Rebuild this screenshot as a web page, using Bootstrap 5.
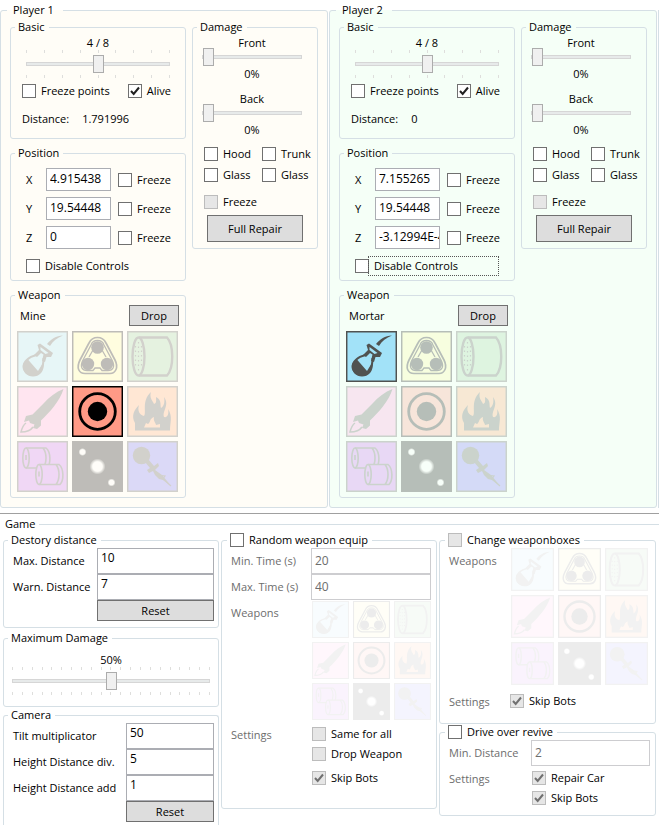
<!DOCTYPE html>
<html lang="en">
<head>
<meta charset="utf-8">
<meta name="viewport" content="width=device-width, initial-scale=1">
<title>Player and game settings</title>
<link rel="stylesheet" href="https://cdn.jsdelivr.net/npm/bootstrap@5.3.0/dist/css/bootstrap.min.css">
<style>
body { font: 11px/16px "Open Sans", "Noto Sans", sans-serif; color: #000; background: #fff; padding-top: 2px; }
fieldset { border: 1px solid #d5dfe5; border-radius: 3px; }
legend { float: none; width: auto; font-size: 11px; line-height: 16px; margin: 0 0 0 4px; padding: 0 4px 0 3px; }
legend.head-player { margin-left: 6px; padding: 0 9px 0 6px; }
legend.head-game { margin-left: 0; padding: 0 4px 0 5px; }
legend.head-check { margin-left: 5px; }
legend .ck { display: flex; }
.players { display: grid; grid-template-columns: 1fr 1fr 1px; }
.next-edge { border-left: 1px solid #d5dfe5; margin-top: 8px; }
.p-one { background: #fffdf7; margin-right: 1px; }
.p-two { background: #f5fff7; margin-right: 1px; }
.panes { display: grid; grid-template-columns: 176fr 126fr; gap: 6px; padding: 1px 9px 9px; align-items: start; }
.gap6 { gap: 6px; }
.ck { display: inline-flex; align-items: center; gap: 5px; line-height: 16px; white-space: nowrap; }
.ck input { appearance: none; flex: none; width: 14px; height: 14px; margin: 0; border: 1px solid #707070; background: #fff center/12px 12px no-repeat; }
.ck input:disabled { border-color: #bcbcbc; background-color: #e6e6e6; }
.ck input:checked { background-image: url("data:image/svg+xml,%3Csvg xmlns='http://www.w3.org/2000/svg' viewBox='0 0 12 12'%3E%3Cpath d='M2 6L4.700 9L10 2.500' fill='none' stroke='%23212121' stroke-width='2'/%3E%3C/svg%3E"); }
.ck input:checked:disabled { background-image: url("data:image/svg+xml,%3Csvg xmlns='http://www.w3.org/2000/svg' viewBox='0 0 12 12'%3E%3Cpath d='M2 6L4.700 9L10 2.500' fill='none' stroke='%23707070' stroke-width='2'/%3E%3C/svg%3E"); }
.focus-dots { gap: 1px; }
.focus-dots span { outline: 1px dotted #555; outline-offset: 1px; padding-left: 4px; width: 127px; }
.tbx { width: 100%; min-width: 0; border: 1px solid #abadb3; border-radius: 0; background: #fff; color: #000; height: 23px; padding: 0 0 3px 3px; font-size: 12px; line-height: 16px; }
.tbx:disabled { border-color: #cdcdd0; color: #6d6d6d; padding-bottom: 1px; }
.tall .tbx { height: 26px; }
.tall .tbx:enabled { padding-bottom: 7px; }
.push { border: 1px solid #707070; background: #ddd; color: #000; border-radius: 0; padding: 0; font-size: 11px; line-height: 16px; height: 21px; min-width: 50px; }
.push:hover { background: #bee6fd; border-color: #3c7fb1; color: #000; }
.push-lg { height: 27px; }
.range { appearance: none; display: block; width: 100%; height: 18px; margin: 0; background: transparent; }
.range::-webkit-slider-runnable-track { height: 4px; background: #e7eaea; border: 1px solid #d6d6d6; }
.range::-webkit-slider-thumb { appearance: none; width: 11px; height: 18px; margin-top: -8px; background: #f0f0f0; border: 1px solid #acacac; }
.ticks { display: flex; justify-content: space-between; height: 3px; margin: 2px 0; }
.ticks i { width: 1px; background: #dededc; }
.slide-label { margin-bottom: -3px; }
.basic-in { padding: 0 11px 11px; }
.basic-slide { padding: 0 4px; }
.checks { gap: 18px; padding-top: 3px; }
.dist { gap: 13px; padding-top: 12px; }
.pos-in { padding: 7px 12px 6px 15px; }
.xyz { display: grid; grid-template-columns: 20px 65px auto; row-gap: 6px; align-items: center; }
.xyz .ck { margin-left: 7px; }
.lock { padding-top: 9px; }
.dmg-in { padding: 0 10px; }
.dmg-slide { padding-right: 5px; margin-left: -1px; }
.pct { margin-bottom: 9px; }
.two { display: grid; grid-template-columns: 58px auto; row-gap: 5px; padding-left: 1px; }
.frz { padding: 11px 0 0 1px; }
.dmg-btn { padding: 5px 4px 6px; }
.wp-in { padding: 2px 6px 5px; }
.wp-head { padding-left: 3px; margin-bottom: 5px; }
.wgrid { display: grid; grid-template-columns: repeat(3, 51px); gap: 4px; }
.wgrid button { display: block; border: 0; padding: 0; background: none; aspect-ratio: 1; opacity: .25; }
.wgrid button.active { opacity: 1; }
.wgrid svg { display: block; width: 100%; height: 100%; }
.w36 { grid-template-columns: repeat(3, 37px); gap: 4px; }
.w43 { grid-template-columns: repeat(3, 43px); }
.w36 button, .w43 button { opacity: .07; }
.w36-box { padding: 1px 0 2px 1px; }
.inset { padding-left: 1px; }
.split { border-top: 1px solid #a0a0a0; margin-top: 5px; padding-top: 2px; }
.game { border-width: 1px 0 0; border-radius: 0; }
.game-cols { display: grid; grid-template-columns: 216fr 216fr 217fr; gap: 2px; padding: 0 3px; }
.dim { color: #6d6d6d; }
.left-col { gap: 2px; }
.max-in { padding: 6px 8px 9px; }
.form-a { display: grid; align-items: center; padding: 0 4px 6px 9px; }
.c84 { grid-template-columns: 84px 1fr; }
.c113 { grid-template-columns: 113px 1fr; }
.form-b { display: grid; padding: 0 5px 22px 9px; grid-template-columns: 80px 1fr; }
.c61 { grid-template-columns: 61px 1fr; padding-bottom: 11px; }
.c82 { grid-template-columns: 82px 1fr; padding-bottom: 9px; }
.form-b > .dim { padding-top: 5px; }
.cam { border-bottom: 0; border-radius: 3px 3px 0 0; }
</style>
</head>
<body class="min-vh-100 d-flex flex-column">

<svg class="position-absolute" width="0" height="0" aria-hidden="true">
  <defs>
    <radialGradient id="glow"><stop offset="0" stop-color="#fff"/><stop offset=".6" stop-color="#fff"/><stop offset="1" stop-color="#fff" stop-opacity="0"/></radialGradient>
  </defs>
  <symbol id="i-mortar" viewBox="0 0 51 51">
    <path d="M.7.7h49.600v49.600H.7z" fill="#a2e2f8" stroke="#505250" stroke-width="1.500"/>
    <path d="M19.500 24C11 26 6.500 31 6.500 36C7 41 12 44 17 44C23 43 26.500 38 26.500 27" fill="none" stroke="#505250" stroke-width="2"/>
    <path d="M6 36C5.500 32 8 30 11 28.500L14 32L21 40L26.500 31C28 41 22 45.500 16 45.500C10 45.500 6 41 6 36Z" fill="#505250"/>
    <path d="M20.500 14L23 12.500L36 22L34 26L29.500 26L28 31L25 30L26.500 23.500L24 22L20 26L17 24L22 19Z" fill="#505250"/>
    <path d="M23.500 16l8 6l-3 1l-5-4z" fill="#a2e2f8"/>
    <path d="M30 13C34 8 39 5 46 4.500C40 7 36 10 33 15Z" fill="#505250"/>
  </symbol>
  <symbol id="i-tri" viewBox="0 0 51 51">
    <path d="M.7.7h49.600v49.600H.7z" fill="#fffd9b" stroke="#000" stroke-width="1.500"/>
    <g fill="none" stroke="#000"><path d="M25.500 6.500C29 6.500 32 8 34 12L43 29C47 37 43 42.500 38 42.500H13C7 42.500 4 37 8 29L17 12C19 8 22 6.500 25.500 6.500Z" stroke-width="1.700"/>
    <path d="M25.500 9.500C29 9.500 31 11 32 14L40.500 30C43 36 41 39.500 36 39.500H30L28 37H23L21 39.500H15C10 39.500 8 36 10.500 30L19 14C20 11 22 9.500 25.500 9.500Z" stroke-width="1.300"/></g>
    <circle cx="25.500" cy="16.500" r="6.300"/><circle cx="16" cy="33" r="6.200"/><circle cx="35" cy="33" r="6.200"/>
    <path d="M21 19L17 26M30 19L34 26" stroke="#000" stroke-width="1.300"/>
  </symbol>
  <symbol id="i-barrel" viewBox="0 0 51 51">
    <path d="M.7.7h49.600v49.600H.7z" fill="#9cd5a0" stroke="#505250" stroke-width="1.500"/>
    <g fill="none" stroke="#505250" stroke-width="2.400"><ellipse cx="11.500" cy="25.500" rx="6" ry="19"/><path d="M12 6.500H40C47 14 47 37 40 44.500H12"/></g>
    <path d="M11.500 11v30M8.500 15v22M14.500 15v22" stroke="#505250" stroke-width="1.200" stroke-dasharray="1.500 3"/>
  </symbol>
  <symbol id="i-rocket" viewBox="0 0 51 51">
    <path d="M.7.7h49.600v49.600H.7z" fill="#ffa0dc" stroke="#505250" stroke-width="1.500"/>
    <path d="M46.500 3C39 6 32 11 27 17L15.500 28.500L9 30L7 36L12 34.500L13 37L17.500 38.500L16 42L20 43L24 39.500L24 34.500C32 27 43 15 46.500 3Z" fill="#505250"/>
    <path d="M9 37C6 39 5 42 4 46C9 46 14 44 16 41" fill="none" stroke="#505250" stroke-width="1.500"/>
  </symbol>
  <symbol id="i-mine" viewBox="0 0 51 51">
    <path d="M.7.7h49.600v49.600H.7z" fill="#ff9a86" stroke="#000" stroke-width="1.500"/>
    <circle cx="25.500" cy="25.500" r="17.800" fill="none" stroke="#000" stroke-width="2.800"/><circle cx="25.500" cy="25.500" r="9.700"/>
  </symbol>
  <symbol id="i-fire" viewBox="0 0 51 51">
    <path d="M.7.7h49.600v49.600H.7z" fill="#ffa870" stroke="#505250" stroke-width="1.500"/>
    <path fill-rule="evenodd" fill="#505250" d="M8 44.500V37C4 30 7 24 12 19C10 25 13 29 17 30C20 27 14 15 24 6C22 12 26 15 27 18C30 17 29 14 29 11C35 14 33 19 34 22C37 20 38 16 37 11C43 19 35 25 37 31C41 32 42 27 41 23C46 31 43 36 43 44.500ZM17 41.500H33V38L29 39C29 37 26 35 27 31C22 33 24 36 21 38L19 37Z"/>
  </symbol>
  <symbol id="i-barrels" viewBox="0 0 51 51">
    <path d="M.7.7h49.600v49.600H.7z" fill="#c468f0" stroke="#505250" stroke-width="1.500"/>
    <g id="brl" fill="none" stroke="#505250" stroke-width="1.600"><ellipse cx="9" cy="17" rx="3.200" ry="10"/><path d="M9 7H29C34 11 34 23 30 27H9M26 7C30 12 30 22 26 27M9 14v5"/></g>
    <path d="M20 23.500h22c5 5 5 16 0 20.500H20z" fill="#c468f0"/>
    <use href="#brl" x="13" y="16.500"/>
  </symbol>
  <symbol id="i-stars" viewBox="0 0 51 51">
    <path d="M0 0h51v51H0z"/>
    <circle cx="25.500" cy="25.500" r="8" fill="url(#glow)"/><circle cx="10.500" cy="11" r="4" fill="url(#glow)"/><circle cx="39.500" cy="41.500" r="4" fill="url(#glow)"/>
  </symbol>
  <symbol id="i-plunger" viewBox="0 0 51 51">
    <path d="M.7.7h49.600v49.600H.7z" fill="#7470f8" stroke="#505250" stroke-width="1.500"/>
    <circle cx="14.500" cy="14.500" r="8.700" fill="#505250"/>
    <path d="M18 21L21 18L27 25L31 22L32 25L28 29L35 34L40 40L44 45L36 39L32 38L28 34L26 30L22 32L20 29L23 27Z" fill="#505250"/>
    <path d="M30 34L38 35L36 38L44 45" fill="none" stroke="#505250" stroke-width="1.200"/>
  </symbol>
</svg>

<main class="d-flex flex-column flex-grow-1">
<div class="players">
  <fieldset class="p-one">
    <legend class="head-player">Player 1</legend>
    <div class="panes">
      <div class="d-flex flex-column gap6">
        <fieldset>
          <legend>Basic</legend>
          <div class="basic-in">
            <div class="basic-slide">
              <label class="slide-label d-block text-center" for="p1pts">4 / 8</label>
              <div class="ticks" data-ticks="9"></div>
              <input class="range" id="p1pts" type="range" min="0" max="8" value="4">
              <div class="ticks" data-ticks="9"></div>
            </div>
            <div class="d-flex checks">
              <label class="ck"><input type="checkbox"><span>Freeze points</span></label>
              <label class="ck"><input type="checkbox" checked><span>Alive</span></label>
            </div>
            <div class="d-flex dist"><span>Distance:</span><span>1.791996</span></div>
          </div>
        </fieldset>
        <fieldset>
          <legend>Position</legend>
          <div class="pos-in">
            <div class="xyz">
              <label for="p1x">X</label><input class="tbx" id="p1x" type="text" value="4.915438"><label class="ck"><input type="checkbox"><span>Freeze</span></label>
              <label for="p1y">Y</label><input class="tbx" id="p1y" type="text" value="19.54448"><label class="ck"><input type="checkbox"><span>Freeze</span></label>
              <label for="p1z">Z</label><input class="tbx" id="p1z" type="text" value="0"><label class="ck"><input type="checkbox"><span>Freeze</span></label>
            </div>
            <div class="d-flex lock"><label class="ck"><input type="checkbox"><span>Disable Controls</span></label></div>
          </div>
        </fieldset>
        <fieldset>
          <legend>Weapon</legend>
          <div class="wp-in">
            <div class="d-flex justify-content-between align-items-center wp-head"><span>Mine</span><button class="btn push" type="button">Drop</button></div>
            <div class="wgrid" data-weapons="mine"></div>
          </div>
        </fieldset>
      </div>
      <fieldset>
        <legend>Damage</legend>
        <div class="dmg-in">
          <div class="dmg-slide text-center">
            <label class="slide-label d-block" for="p1f">Front</label><input class="range" id="p1f" type="range" value="0"><div class="pct">0%</div>
            <label class="slide-label d-block" for="p1b">Back</label><input class="range" id="p1b" type="range" value="0"><div class="mb-2">0%</div>
          </div>
          <div class="two">
            <label class="ck"><input type="checkbox"><span>Hood</span></label><label class="ck"><input type="checkbox"><span>Trunk</span></label>
            <label class="ck"><input type="checkbox"><span>Glass</span></label><label class="ck"><input type="checkbox"><span>Glass</span></label>
          </div>
          <div class="d-flex frz"><label class="ck"><input type="checkbox" disabled><span>Freeze</span></label></div>
          <div class="dmg-btn"><button class="btn push push-lg w-100" type="button">Full Repair</button></div>
        </div>
      </fieldset>
    </div>
  </fieldset>

  <fieldset class="p-two">
    <legend class="head-player">Player 2</legend>
    <div class="panes">
      <div class="d-flex flex-column gap6">
        <fieldset>
          <legend>Basic</legend>
          <div class="basic-in">
            <div class="basic-slide">
              <label class="slide-label d-block text-center" for="p2pts">4 / 8</label>
              <div class="ticks" data-ticks="9"></div>
              <input class="range" id="p2pts" type="range" min="0" max="8" value="4">
              <div class="ticks" data-ticks="9"></div>
            </div>
            <div class="d-flex checks">
              <label class="ck"><input type="checkbox"><span>Freeze points</span></label>
              <label class="ck"><input type="checkbox" checked><span>Alive</span></label>
            </div>
            <div class="d-flex dist"><span>Distance:</span><span>0</span></div>
          </div>
        </fieldset>
        <fieldset>
          <legend>Position</legend>
          <div class="pos-in">
            <div class="xyz">
              <label for="p2x">X</label><input class="tbx" id="p2x" type="text" value="7.155265"><label class="ck"><input type="checkbox"><span>Freeze</span></label>
              <label for="p2y">Y</label><input class="tbx" id="p2y" type="text" value="19.54448"><label class="ck"><input type="checkbox"><span>Freeze</span></label>
              <label for="p2z">Z</label><input class="tbx" id="p2z" type="text" value="-3.12994E-44"><label class="ck"><input type="checkbox"><span>Freeze</span></label>
            </div>
            <div class="d-flex lock"><label class="ck focus-dots"><input type="checkbox"><span>Disable Controls</span></label></div>
          </div>
        </fieldset>
        <fieldset>
          <legend>Weapon</legend>
          <div class="wp-in">
            <div class="d-flex justify-content-between align-items-center wp-head"><span>Mortar</span><button class="btn push" type="button">Drop</button></div>
            <div class="wgrid" data-weapons="mortar"></div>
          </div>
        </fieldset>
      </div>
      <fieldset>
        <legend>Damage</legend>
        <div class="dmg-in">
          <div class="dmg-slide text-center">
            <label class="slide-label d-block" for="p2f">Front</label><input class="range" id="p2f" type="range" value="0"><div class="pct">0%</div>
            <label class="slide-label d-block" for="p2b">Back</label><input class="range" id="p2b" type="range" value="0"><div class="mb-2">0%</div>
          </div>
          <div class="two">
            <label class="ck"><input type="checkbox"><span>Hood</span></label><label class="ck"><input type="checkbox"><span>Trunk</span></label>
            <label class="ck"><input type="checkbox"><span>Glass</span></label><label class="ck"><input type="checkbox"><span>Glass</span></label>
          </div>
          <div class="d-flex frz"><label class="ck"><input type="checkbox" disabled><span>Freeze</span></label></div>
          <div class="dmg-btn"><button class="btn push push-lg w-100" type="button">Full Repair</button></div>
        </div>
      </fieldset>
    </div>
  </fieldset>
  <div class="next-edge"></div>
</div>

<div class="split d-flex flex-column flex-grow-1">
  <fieldset class="game">
    <legend class="head-game">Game</legend>
    <div class="game-cols">
      <div class="d-flex flex-column left-col">
        <fieldset>
          <legend>Destory distance</legend>
          <div class="form-a c84 tall">
            <label for="maxd">Max. Distance</label><input class="tbx" id="maxd" type="text" value="10">
            <label for="warnd">Warn. Distance</label><input class="tbx" id="warnd" type="text" value="7">
            <span></span><button class="btn push" type="button">Reset</button>
          </div>
        </fieldset>
        <div class="d-flex flex-column flex-grow-1">
          <fieldset>
            <legend>Maximum Damage</legend>
            <div class="max-in">
              <label class="slide-label d-block text-center" for="mxd">50%</label>
              <div class="ticks" data-ticks="21"></div>
              <input class="range" id="mxd" type="range" value="50">
              <div class="ticks" data-ticks="21"></div>
            </div>
          </fieldset>
          <fieldset class="cam flex-grow-1">
            <legend>Camera</legend>
            <div class="form-a c113 tall pb-1">
              <label for="tilt">Tilt multiplicator</label><input class="tbx" id="tilt" type="text" value="50">
              <label for="hdiv">Height Distance div.</label><input class="tbx" id="hdiv" type="text" value="5">
              <label for="hadd">Height Distance add</label><input class="tbx" id="hadd" type="text" value="1">
              <span></span><button class="btn push" type="button">Reset</button>
            </div>
          </fieldset>
        </div>
      </div>

      <div>
        <fieldset>
          <legend class="head-check"><label class="ck"><input type="checkbox"><span>Random weapon equip</span></label></legend>
          <div class="form-b tall">
            <label class="dim" for="mint">Min. Time (s)</label><input class="tbx" id="mint" type="text" value="20" disabled>
            <label class="dim" for="maxt">Max. Time (s)</label><input class="tbx" id="maxt" type="text" value="40" disabled>
            <span class="dim">Weapons</span><div class="w36-box"><div class="wgrid w36" data-weapons=""></div></div>
            <span class="dim">Settings</span>
            <div class="d-flex flex-column align-items-start gap-1 pt-1 inset">
              <label class="ck"><input type="checkbox" disabled><span>Same for all</span></label>
              <label class="ck"><input type="checkbox" disabled><span>Drop Weapon</span></label>
              <label class="ck pt-1"><input type="checkbox" checked disabled><span>Skip Bots</span></label>
            </div>
          </div>
        </fieldset>
      </div>

      <div>
        <fieldset>
          <legend class="head-check"><label class="ck"><input type="checkbox" disabled><span>Change weaponboxes</span></label></legend>
          <div class="form-b c61">
            <span class="dim">Weapons</span><div class="pb-1 inset"><div class="wgrid w43" data-weapons=""></div></div>
            <span class="dim">Settings</span>
            <div class="pt-1"><label class="ck"><input type="checkbox" checked disabled><span>Skip Bots</span></label></div>
          </div>
        </fieldset>
        <fieldset>
          <legend class="head-check"><label class="ck"><input type="checkbox"><span>Drive over revive</span></label></legend>
          <div class="form-b c82 tall">
            <label class="dim" for="mind">Min. Distance</label><input class="tbx" id="mind" type="text" value="2" disabled>
            <span class="dim">Settings</span>
            <div class="d-flex flex-column align-items-start gap-1 pt-1 inset">
              <label class="ck"><input type="checkbox" checked disabled><span>Repair Car</span></label>
              <label class="ck"><input type="checkbox" checked disabled><span>Skip Bots</span></label>
            </div>
          </div>
        </fieldset>
      </div>
    </div>
  </fieldset>
</div>
</main>

<script src="https://cdn.jsdelivr.net/npm/bootstrap@5.3.0/dist/js/bootstrap.bundle.min.js"></script>
<script>
document.querySelectorAll('[data-ticks]').forEach(el => {
  el.innerHTML = '<i></i>'.repeat(+el.dataset.ticks);
});
const weapons = ['mortar', 'tri', 'barrel', 'rocket', 'mine', 'fire', 'barrels', 'stars', 'plunger'];
document.querySelectorAll('[data-weapons]').forEach(el => {
  el.innerHTML = weapons.map(w =>
    `<button type="button" class="${w === el.dataset.weapons ? 'active' : ''}" aria-label="${w}"><svg><use href="#i-${w}"/></svg></button>`).join('');
});
</script>
</body>
</html>
